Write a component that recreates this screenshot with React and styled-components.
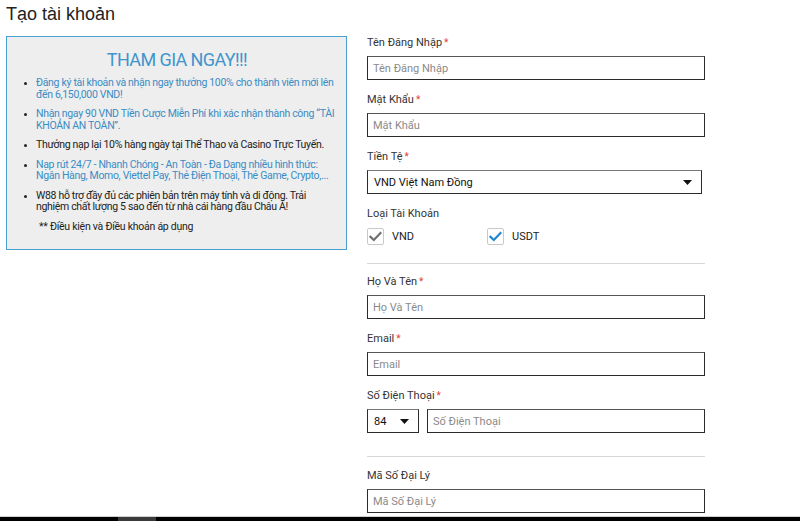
import styled, { createGlobalStyle } from "styled-components";

const GlobalStyle = createGlobalStyle`
  html, body {
    margin: 0;
    padding: 0;
    background: #fff;
    font-family: Roboto, "Liberation Sans", Arial, sans-serif;
    color: #222;
  }
  * { box-sizing: border-box; }
`;

const bullets = [
  { text: "Đăng ký tài khoản và nhận ngay thưởng 100% cho thành viên mới lên đến 6,150,000 VND!", blue: true },
  { text: "Nhận ngay 90 VND Tiền Cược Miễn Phí khi xác nhận thành công “TÀI KHOẢN AN TOÀN”.", blue: true },
  { text: "Thưởng nạp lại 10% hàng ngày tại Thể Thao và Casino Trực Tuyến.", blue: false },
  { text: "Nạp rút 24/7 - Nhanh Chóng - An Toàn - Đa Dạng nhiều hình thức: Ngân Hàng, Momo, Viettel Pay, Thẻ Điện Thoại, Thẻ Game, Crypto,...", blue: true },
  { text: "W88 hỗ trợ đầy đủ các phiên bản trên máy tính và di động. Trải nghiệm chất lượng 5 sao đến từ nhà cái hàng đầu Châu Á!", blue: false },
];

function Check({ active }) {
  return (
    <Box>
      <svg width="13" height="11" viewBox="0 0 13 11">
        <path
          d="M1.5 5.8 L4.8 9 L11.5 2"
          fill="none"
          stroke={active ? "#1f87d0" : "#707070"}
          strokeWidth="2.2"
          strokeLinecap="square"
        />
      </svg>
    </Box>
  );
}

function Arrow() {
  return (
    <svg width="9" height="5" viewBox="0 0 9 5">
      <path d="M0 0 H9 L4.5 5 Z" fill="#111" />
    </svg>
  );
}

function Field({ label, required, placeholder }) {
  return (
    <FieldWrap>
      <Label>
        {label}
        {required && <Star>*</Star>}
      </Label>
      <Input placeholder={placeholder} />
    </FieldWrap>
  );
}

export default function App() {
  return (
    <Page>
      <GlobalStyle />
      <Heading>Tạo tài khoản</Heading>
      <Columns>
        <Promo>
          <PromoTitle>THAM GIA NGAY!!!</PromoTitle>
          <List>
            {bullets.map((b, i) => (
              <Item key={i} $blue={b.blue}>{b.text}</Item>
            ))}
          </List>
          <Note>** Điều kiện và Điều khoản áp dụng</Note>
        </Promo>

        <Form>
          <Field label="Tên Đăng Nhập" required placeholder="Tên Đăng Nhập" />
          <Field label="Mật Khẩu" required placeholder="Mật Khẩu" />
          <FieldWrap>
            <Label>
              Tiền Tệ<Star>*</Star>
            </Label>
            <Select $width="335px">
              <span>VND Việt Nam Đồng</span>
              <Arrow />
            </Select>
          </FieldWrap>
          <FieldWrap $last>
            <Label>Loại Tài Khoản</Label>
            <Checks>
              <CheckItem>
                <Check />
                <span>VND</span>
              </CheckItem>
              <CheckItem>
                <Check active />
                <span>USDT</span>
              </CheckItem>
            </Checks>
          </FieldWrap>

          <Divider $top="18px" $bottom="11px" />

          <Field label="Họ Và Tên" required placeholder="Họ Và Tên" />
          <Field label="Email" required placeholder="Email" />
          <FieldWrap $last>
            <Label>
              Số Điện Thoại<Star>*</Star>
            </Label>
            <PhoneRow>
              <Select $width="52px">
                <span>84</span>
                <Arrow />
              </Select>
              <Input placeholder="Số Điện Thoại" />
            </PhoneRow>
          </FieldWrap>

          <Divider $top="23px" $bottom="12px" />

          <Field label="Mã Số Đại Lý" placeholder="Mã Số Đại Lý" />
        </Form>
      </Columns>
      <ScrollBar>
        <Thumb />
      </ScrollBar>
    </Page>
  );
}

const Page = styled.div`
  padding: 0 0 0 6px;
  min-height: 521px;
`;

const Heading = styled.h1`
  margin: 0;
  padding-top: 3px;
  height: 36px;
  font-family: "Liberation Sans", Arial, sans-serif;
  font-size: 18px;
  line-height: 22px;
  font-weight: 400;
  color: #222;
`;

const Columns = styled.div`
  display: flex;
  align-items: flex-start;
  gap: 20px;
`;

const Promo = styled.div`
  width: 341px;
  background: #eeeeee;
  border: 1px solid #4a9fd3;
  padding: 13px 7px 17px 8px;
`;

const PromoTitle = styled.h2`
  margin: 0 0 7px;
  text-align: center;
  font-size: 18px;
  line-height: 20px;
  font-weight: 400;
  letter-spacing: -0.6px;
  color: #3f95cd;
`;

const List = styled.ul`
  margin: 0;
  padding-left: 21px;
  list-style: disc;
`;

const Item = styled.li`
  font-size: 10.5px;
  letter-spacing: -0.32px;
  line-height: 11.5px;
  margin-bottom: 8px;
  color: ${(p) => (p.$blue ? "#3a8cc4" : "#222")};
  &::marker {
    color: #222;
    font-size: 9px;
  }
`;

const Note = styled.div`
  margin: 8px 0 0 24px;
  font-size: 10.5px;
  letter-spacing: -0.25px;
  line-height: 11.5px;
  color: #222;
`;

const Form = styled.div`
  width: 338px;
  display: flex;
  flex-direction: column;
`;

const FieldWrap = styled.div`
  margin-bottom: ${(p) => (p.$last ? "0" : "13px")};
`;

const Label = styled.div`
  font-size: 11px;
  line-height: 14px;
  height: 14px;
  margin-bottom: 6px;
  color: #333;
`;

const Star = styled.span`
  color: #e0403a;
  margin-left: 2px;
  font-size: 10px;
`;

const Input = styled.input`
  display: block;
  width: 100%;
  height: 24px;
  border: 1px solid #2b2b2b;
  border-top-color: #555;
  border-radius: 0;
  padding: 0 5px;
  font-family: Roboto, "Liberation Sans", Arial, sans-serif;
  font-size: 11px;
  color: #222;
  background: #fff;
  outline: none;
  &::placeholder {
    color: #8a8a8a;
  }
`;

const Select = styled.div`
  width: ${(p) => p.$width};
  flex: none;
  height: 24px;
  display: flex;
  align-items: center;
  justify-content: space-between;
  padding: 0 9px 0 6px;
  border: 1px solid #2b2b2b;
  border-top-color: #777;
  background: #fff;
  font-size: 11px;
  color: #111;
`;

const PhoneRow = styled.div`
  display: flex;
  gap: 8px;
`;

const Checks = styled.div`
  display: flex;
  padding-top: 1px;
`;

const CheckItem = styled.label`
  width: 120px;
  display: flex;
  align-items: center;
  gap: 8px;
  font-size: 11px;
  color: #222;
`;

const Box = styled.span`
  width: 17px;
  height: 17px;
  border: 1px solid #c9c9c9;
  border-radius: 2px;
  background: #fff;
  display: flex;
  align-items: center;
  justify-content: center;
`;

const Divider = styled.hr`
  margin: ${(p) => p.$top} 0 ${(p) => p.$bottom};
  border: 0;
  border-top: 1px solid #d8d8d8;
  width: 338px;
`;

const ScrollBar = styled.div`
  position: fixed;
  left: 0;
  right: 0;
  bottom: 0;
  height: 5px;
  background: #000;
  border-top: 1px solid #d0d0d0;
`;

const Thumb = styled.div`
  position: absolute;
  left: 118px;
  top: 0;
  width: 38px;
  height: 4px;
  background: #3a3a3a;
`;
